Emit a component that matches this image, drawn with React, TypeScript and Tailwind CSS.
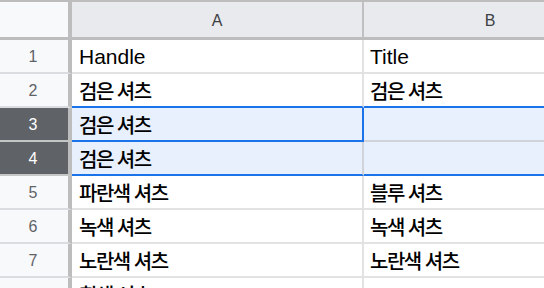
type Row = {
  n: number;
  a: string;
  b: string;
  selected?: boolean;
  active?: boolean;
};

const rows: Row[] = [
  { n: 1, a: "Handle", b: "Title" },
  { n: 2, a: "검은 셔츠", b: "검은 셔츠" },
  { n: 3, a: "검은 셔츠", b: "", selected: true, active: true },
  { n: 4, a: "검은 셔츠", b: "", selected: true },
  { n: 5, a: "파란색 셔츠", b: "블루 셔츠" },
  { n: 6, a: "녹색 셔츠", b: "녹색 셔츠" },
  { n: 7, a: "노란색 셔츠", b: "노란색 셔츠" },
  { n: 8, a: "흰색 셔츠", b: "" },
];

function textClass(s: string) {
  return /[가-힣]/.test(s)
    ? "text-[20px] tracking-[-1.5px] font-medium pt-[4px]"
    : "text-[21px] pt-[2px]";
}

export default function App() {
  return (
    <div className="w-[544px] h-[288px] overflow-hidden bg-white font-['Liberation_Sans','Noto_Sans_CJK_KR',sans-serif] text-black">
      <div className="w-[700px]">
        {/* Column header */}
        <div className="flex h-[40px] border-t-2 border-b-[3px] border-[#bdbdbd] bg-[#e8eaed]">
          <div className="w-[72px] shrink-0 bg-[#f8f9fa] border-r-4 border-[#bdbdbd]" />
          <div className="w-[292px] shrink-0 border-r-2 border-[#c0c0c0] flex items-center justify-center pt-[3px] text-[16px] text-[#3c4043]">
            A
          </div>
          <div className="w-[252px] shrink-0 flex items-center justify-center pt-[3px] text-[16px] text-[#3c4043]">
            B
          </div>
        </div>

        {rows.map((r, i) => {
          const next = rows[i + 1];
          const blueBelow = (next?.selected && !r.selected) || (r.selected && !next?.selected);
          const aBottom = blueBelow || r.active ? "border-b-[#1a73e8]" : r.selected ? "border-b-[#d0d4da]" : "border-b-[#e2e2e2]";
          const bBottom = blueBelow ? "border-b-[#1a73e8]" : r.selected ? "border-b-[#d0d4da]" : "border-b-[#e2e2e2]";
          const aRight = r.active ? "border-r-[#1a73e8]" : r.selected ? "border-r-[#d0d4da]" : "border-r-[#e2e2e2]";
          return (
            <div key={r.n} className="flex h-[34px]">
              <div
                className={`w-[72px] shrink-0 border-r-4 border-r-[#bdbdbd] border-b-2 flex items-center justify-center pr-[2px] pt-[1px] text-[16px] ${
                  r.selected
                    ? "bg-[#5f6368] text-white border-b-[#c4c7c5]"
                    : "bg-[#f8f9fa] text-[#5f6368] border-b-[#dadce0]"
                }`}
              >
                {r.n}
              </div>
              <div
                className={`w-[292px] shrink-0 border-r-2 border-b-2 ${aRight} ${aBottom} flex items-center pl-[7px] whitespace-nowrap ${textClass(r.a)} ${
                  r.selected ? "bg-[#e8f0fe]" : ""
                }`}
              >
                {r.a}
              </div>
              <div
                className={`w-[252px] shrink-0 border-b-2 ${bBottom} flex items-center pl-[6px] whitespace-nowrap ${textClass(r.b)} ${
                  r.selected ? "bg-[#e8f0fe]" : ""
                }`}
              >
                {r.b}
              </div>
            </div>
          );
        })}
      </div>
    </div>
  );
}
